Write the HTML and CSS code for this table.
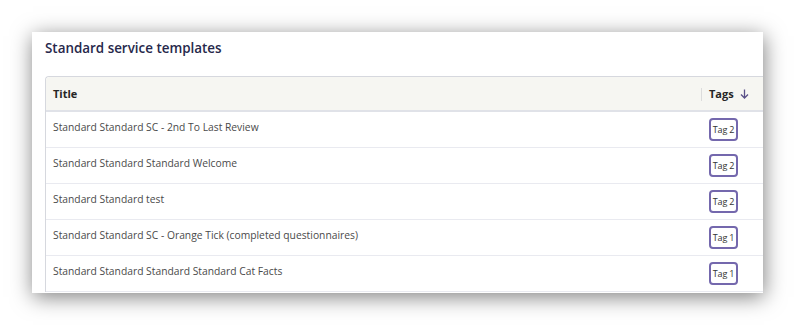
FILE: index.html
```html
<!DOCTYPE html>
<html>
<head>
<meta charset="utf-8">
<link rel="stylesheet" href="styles.css">
</head>
<body>
<div class="card">
  <h2 class="card-title">Standard service templates</h2>
  <table class="grid">
    <thead>
      <tr>
        <th class="col-title">Title</th>
        <th class="col-tags"><span class="sep"></span>Tags<svg class="arrow" width="9" height="10" viewBox="0 0 9 10"><path d="M4.5 0.5V9M1 5.5L4.5 9L8 5.5" fill="none" stroke="#5a5088" stroke-width="1.3"/></svg></th>
      </tr>
    </thead>
    <tbody>
      <tr><td class="col-title">Standard Standard SC - 2nd To Last Review</td><td class="col-tags"><span class="tag">Tag 2</span></td></tr>
      <tr><td class="col-title">Standard Standard Standard Welcome</td><td class="col-tags"><span class="tag">Tag 2</span></td></tr>
      <tr><td class="col-title">Standard Standard test</td><td class="col-tags"><span class="tag">Tag 2</span></td></tr>
      <tr><td class="col-title">Standard Standard SC - Orange Tick (completed questionnaires)</td><td class="col-tags"><span class="tag">Tag 1</span></td></tr>
      <tr><td class="col-title">Standard Standard Standard Standard Cat Facts</td><td class="col-tags"><span class="tag">Tag 1</span></td></tr>
    </tbody>
  </table>
</div>
</body>
</html>
```
FILE: styles.css
```css
html, body {
  margin: 0;
  background: #ffffff;
}
body {
  padding: 32px;
  font-family: "Open Sans", "Noto Sans", sans-serif;
}
.card {
  width: 731px;
  height: 261px;
  box-sizing: border-box;
  background: #fff;
  padding: 6px 0 0 13px;
  overflow: hidden;
  box-shadow: 1px 4px 20px rgba(0, 0, 0, 0.5);
}
.card-title {
  margin: 0 0 18px;
  font-size: 13.4px;
  line-height: 20px;
  font-weight: 600;
  color: #27284b;
}
.grid {
  border-collapse: separate;
  border-spacing: 0;
  width: 736px;
  table-layout: fixed;
  border-top: 1px solid #d6d8de;
  border-left: 1px solid #d6d8de;
  border-radius: 4px 0 0 0;
}
.grid th {
  background: #f6f6f2;
  height: 33px;
  padding: 0;
  font-size: 11px;
  font-weight: 700;
  color: #262626;
  text-align: left;
  border-bottom: 2px solid #e0e2e8;
  vertical-align: middle;
}
.grid th.col-title {
  padding-left: 7px;
  width: 648px;
  border-radius: 4px 0 0 0;
}
.grid th.col-tags {
  padding-left: 8px;
  position: relative;
}
.sep {
  position: absolute;
  left: 0;
  top: 11px;
  width: 1px;
  height: 13px;
  background: #dcdcdc;
}
.arrow {
  margin-left: 6px;
  vertical-align: -1px;
}
.grid td {
  height: 36px;
  box-sizing: border-box;
  padding: 0;
  border-bottom: 1px solid #e9eaf0;
  vertical-align: top;
  font-size: 10.3px;
  line-height: 16px;
  color: #4a4a4a;
}
.grid td.col-title {
  padding: 7px 0 0 7px;
}
.grid td.col-tags {
  padding: 6px 0 0 8px;
}
.tag {
  display: inline-block;
  width: 29px;
  height: 23px;
  box-sizing: border-box;
  border: 2px solid #7468ad;
  border-radius: 4px;
  font-size: 9px;
  line-height: 19px;
  text-align: center;
  color: #333;
  letter-spacing: -0.2px;
}
```
